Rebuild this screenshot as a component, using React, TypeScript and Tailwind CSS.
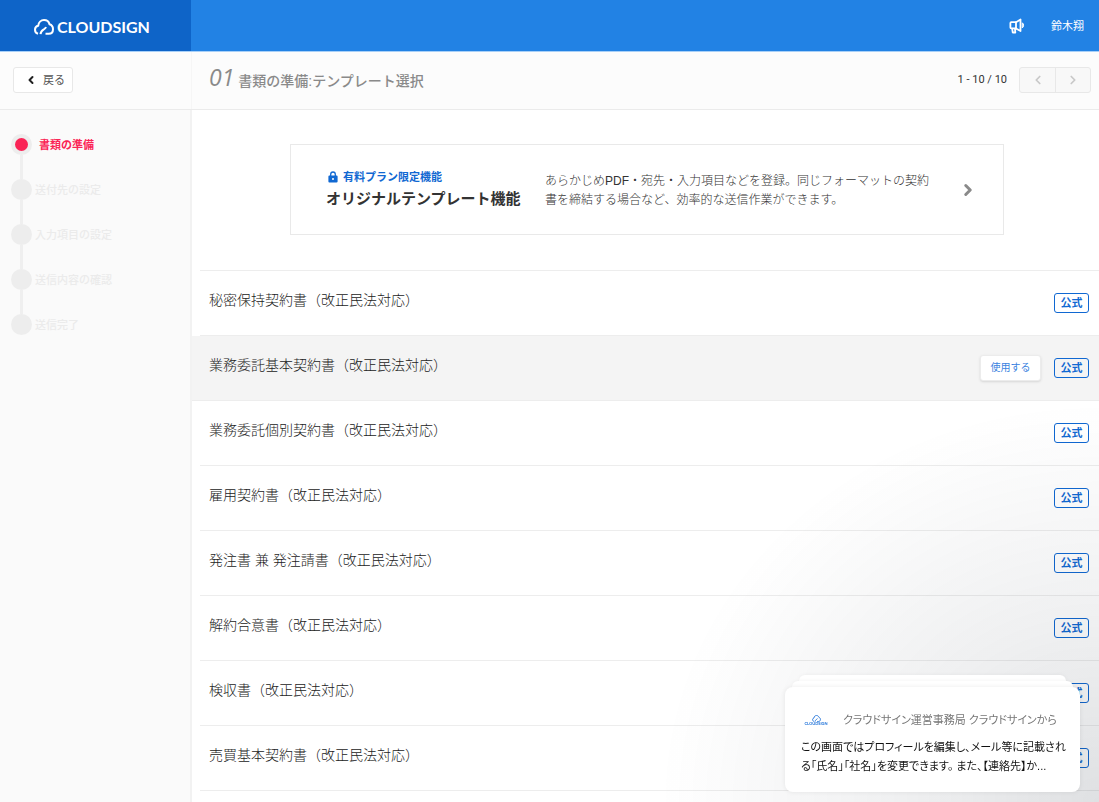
import React from 'react';
import { ChevronLeft, ChevronRight } from 'lucide-react';

interface Step {
  label: string;
  active?: boolean;
}

interface Template {
  name: string;
  selected?: boolean;
}

const steps: Step[] = [
  { label: '書類の準備', active: true },
  { label: '送付先の設定' },
  { label: '入力項目の設定' },
  { label: '送信内容の確認' },
  { label: '送信完了' },
];

const templates: Template[] = [
  { name: '秘密保持契約書（改正民法対応）' },
  { name: '業務委託基本契約書（改正民法対応）', selected: true },
  { name: '業務委託個別契約書（改正民法対応）' },
  { name: '雇用契約書（改正民法対応）' },
  { name: '発注書 兼 発注請書（改正民法対応）' },
  { name: '解約合意書（改正民法対応）' },
  { name: '検収書（改正民法対応）' },
  { name: '売買基本契約書（改正民法対応）' },
];

function CloudIcon({ className }: { className: string }) {
  return (
    <svg viewBox="0 0 20 16" fill="none" stroke="currentColor" strokeWidth="2" strokeLinejoin="round" className={className} aria-hidden="true">
      <path d="M4 14.800C2.100 14.200 1 12.600 1 10.700c0-2 1.300-3.500 3.200-3.900C4.500 3.500 6.900 1.100 10 1.100c2.700 0 4.900 1.700 5.500 4.200 2.200.7 3.500 2.500 3.500 4.900 0 2.800-1.700 4.600-4.300 4.600H11.500" />
      <path d="M6.500 15.200c.3-2.300 1.300-3.700 3.300-4.800 1.200-.7 1.900-1.400 2.200-2.400" />
    </svg>
  );
}

function MegaphoneIcon() {
  return (
    <svg viewBox="0 0 16 16" fill="none" stroke="currentColor" strokeWidth="1.800" strokeLinejoin="round" strokeLinecap="round" className="h-4 w-4" aria-hidden="true">
      <path d="M7 4.200H2.300a.9.900 0 0 0-.9.900v4.400c0 .5.400.9.900.9H7z" />
      <path d="M7 4.200l4.500-2.700v11.600L7 10.400" />
      <path d="M3.200 10.600l.5 3.900h2.600l-.3-3.900" />
      <path d="M13.600 5c1.400 1 1.400 3.700 0 4.700z" fill="currentColor" strokeWidth="1" />
    </svg>
  );
}

function LockIcon() {
  return (
    <svg viewBox="0 0 10 12" className="h-3 w-[10px]" aria-hidden="true">
      <path d="M2.700 5V3.300a2.300 2.300 0 0 1 4.600 0V5" fill="none" stroke="currentColor" strokeWidth="1.300" />
      <path fillRule="evenodd" fill="currentColor" d="M1.300 4.500h7.400c.5 0 .9.400.9.900v5.200c0 .5-.4.900-.9.900H1.300a.9.900 0 0 1-.9-.9V5.400c0-.5.400-.9.900-.9zM5 7a1 1 0 1 0 0 2 1 1 0 0 0 0-2z" />
    </svg>
  );
}

function Header() {
  return (
    <header className="flex h-[51px] shrink-0 bg-[#2282e4] text-white">
      <a href="#" className="flex w-[191px] items-center gap-[3px] bg-[#0e64c8] pt-[2px] pl-[34px]">
        <CloudIcon className="h-4 w-5" />
        <span className="font-['Lato',sans-serif] text-[16px] leading-4 font-bold">CLOUDSIGN</span>
      </a>
      <div className="flex flex-1 items-center justify-end gap-[26px] pr-[15px]">
        <button type="button" aria-label="お知らせ">
          <MegaphoneIcon />
        </button>
        <a href="#" className="text-[11px] leading-4">鈴木翔</a>
      </div>
    </header>
  );
}

function Toolbar() {
  return (
    <div className="flex h-[59px] shrink-0 border-t border-b border-t-[#a8d0f8] border-b-[#ebebeb] bg-[#fcfcfc]">
      <div className="flex w-[192px] items-center border-r border-[#f6f6f6] pb-[2px] pl-[13px]">
        <button type="button" className="flex h-[26px] w-[60px] items-center gap-[6px] rounded-[3px] border border-[#e8e8e8] bg-white pl-[11px] text-[11px] leading-4 text-[#555]">
          <ChevronLeft className="h-3 w-3 text-[#222]" strokeWidth={4} />
          戻る
        </button>
      </div>
      <div className="flex flex-1 items-center justify-between pr-2 pb-[2px] pl-[17px]">
        <h1 className="flex items-baseline gap-1 pb-[2px] text-[14px] leading-6 font-medium text-[#8a8a8a]">
          <span className="font-['Open_Sans',sans-serif] text-[23px] leading-6 font-normal italic">01</span>
          書類の準備:テンプレート選択
        </h1>
        <div className="flex items-center gap-3">
          <span className="font-['Roboto',sans-serif] text-[11px] leading-4 text-[#333]">1 - 10 / 10</span>
          <div className="flex h-[26px] rounded-[3px] border border-[#e8e8e8] bg-[#f8f8f8] text-[#c8c8c8]">
            <button type="button" aria-label="前へ" className="flex w-9 items-center justify-center border-r border-[#e8e8e8]">
              <ChevronLeft className="h-[14px] w-[14px]" strokeWidth={3} />
            </button>
            <button type="button" aria-label="次へ" className="flex w-[34px] items-center justify-center">
              <ChevronRight className="h-[14px] w-[14px]" strokeWidth={3} />
            </button>
          </div>
        </div>
      </div>
    </div>
  );
}

function Sidebar() {
  return (
    <aside className="w-[192px] shrink-0 border-r-2 border-[#f2f2f2] bg-[#fafafa] pt-6 pl-[11px]">
      <ol>
        {steps.map((step, index) => (
          <li key={step.label} className="flex">
            <div className="flex w-[21px] flex-col items-center">
              <span className="flex h-[21px] w-[21px] items-center justify-center rounded-full bg-[#ededed]">
                {step.active && <span className="h-[13px] w-[13px] rounded-full bg-[#fa2456]" />}
              </span>
              {index < steps.length - 1 && <span className="h-6 w-[3px] bg-[#efefef]" />}
            </div>
            <span className={step.active
              ? 'pl-[7px] text-[11px] leading-[23px] font-bold text-[#fa2456]'
              : 'pl-[3px] text-[11px] leading-[23px] font-medium text-[#ebebeb]'}
            >
              {step.label}
            </span>
          </li>
        ))}
      </ol>
    </aside>
  );
}

function PlanCard() {
  return (
    <a href="#" className="mt-[34px] mr-[95px] mb-[35px] ml-[98px] flex h-[91px] items-center border border-[#e9e9e9] pr-[26px] pl-[35px]">
      <div className="w-[219px] shrink-0 pb-[2px]">
        <p className="flex items-center gap-[5px] pl-[2px] text-[11px] leading-5 font-bold text-[#1068d2]">
          <LockIcon />
          有料プラン限定機能
        </p>
        <h2 className="text-[15px] leading-6 font-bold text-[#333]">オリジナルテンプレート機能</h2>
      </div>
      <p className="w-[392px] pt-[2px] text-[12px] leading-[19px] font-light text-[#333]">
        あらかじめPDF・宛先・入力項目などを登録。同じフォーマットの契約書を締結する場合など、効率的な送信作業ができます。
      </p>
      <ChevronRight className="ml-auto h-[18px] w-[18px] text-[#8a8a8a]" strokeWidth={4} />
    </a>
  );
}

function TemplateRow({ name, selected }: Template) {
  return (
    <li className={selected ? 'bg-[#f4f4f4]' : 'pl-2'}>
      <div className={`flex h-[65px] border-b border-[#ededed] pr-[10px] ${selected ? 'pl-[17px]' : 'pl-[9px]'}`}>
        <span className="flex-1 pt-[17px] text-[14px] leading-6 font-light text-[#222]">{name}</span>
        <div className="flex items-center gap-[13px]">
          {selected && (
            <button type="button" className="h-[26px] w-[61px] rounded-[3px] border border-[#ececec] bg-white text-[10px] leading-4 text-[#3a82e0] shadow-sm">
              使用する
            </button>
          )}
          <span className="flex h-5 w-[35px] items-center justify-center rounded-[3px] border border-[#1068d2] text-[11px] leading-4 font-bold text-[#1068d2]">
            公式
          </span>
        </div>
      </div>
    </li>
  );
}

function Notification() {
  return (
    <div className="pointer-events-none fixed right-0 bottom-0 flex h-[500px] w-[500px] flex-col items-end justify-end bg-[radial-gradient(440px_400px_at_right_bottom,rgba(29,39,54,0.14)_0%,rgba(29,39,54,0.07)_45%,rgba(29,39,54,0)_100%)] pr-[19px] pb-[10px]">
      <div className="flex w-[295px] flex-col items-center">
        <div className="h-[6px] w-[267px] rounded-t-lg bg-white shadow-[0_0_4px_rgba(0,0,0,0.05)]" />
        <div className="h-[6px] w-[281px] rounded-t-lg bg-white shadow-[0_0_4px_rgba(0,0,0,0.05)]" />
        <div className="pointer-events-auto h-[105px] w-full rounded-lg bg-white px-4 pt-[23px] shadow-[0_0_5px_rgba(0,0,0,0.08)]">
          <div className="flex items-center">
            <div className="flex w-[30px] shrink-0 flex-col items-center text-[#1a6fd8]">
              <CloudIcon className="h-[7px] w-[9px]" />
              <span className="font-['Lato',sans-serif] text-[4px] leading-[4px] font-bold">CLOUDSIGN</span>
            </div>
            <p className="pl-3 text-[11px] leading-5 whitespace-nowrap text-[#777] [font-feature-settings:'palt']">
              クラウドサイン運営事務局 クラウドサインから
            </p>
          </div>
          <p className="mt-2 text-[11px] leading-[19px] whitespace-nowrap text-[#111] [font-feature-settings:'palt']">
            この画面ではプロフィールを編集し、メール等に記載され<br />
            る「氏名」「社名」を変更できます。 また、【連絡先】か...
          </p>
        </div>
      </div>
    </div>
  );
}

export default function App() {
  return (
    <div className="flex h-screen flex-col overflow-hidden bg-white font-['Liberation_Sans','Noto_Sans_CJK_JP',sans-serif]">
      <Header />
      <Toolbar />
      <div className="flex min-h-0 flex-1">
        <Sidebar />
        <main className="flex-1 overflow-hidden">
          <PlanCard />
          <div className="ml-2 border-t border-[#ededed]" />
          <ul>
            {templates.map((template) => (
              <TemplateRow key={template.name} {...template} />
            ))}
          </ul>
        </main>
      </div>
      <Notification />
    </div>
  );
}
